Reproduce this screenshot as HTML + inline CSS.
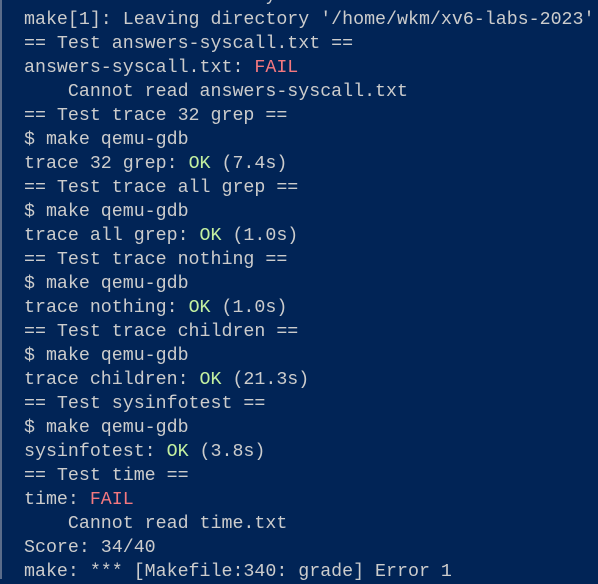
<!DOCTYPE html>
<html><head><meta charset="utf-8"><style>
html,body{margin:0;padding:0;}
body{width:598px;height:579px;overflow:hidden;background:#012456;position:relative;border-left:2px solid #5a6c8a;box-sizing:border-box;}
pre{position:absolute;left:22px;top:-16px;margin:0;font-family:"Liberation Mono",monospace;font-size:18.3px;line-height:24px;color:#cccccc;}
.f{color:#f4787f}.o{color:#c3f0a0}
</style></head><body><pre>                      y
make[1]: Leaving directory '/home/wkm/xv6-labs-2023'
== Test answers-syscall.txt ==
answers-syscall.txt: <span class="f">FAIL</span>
    Cannot read answers-syscall.txt
== Test trace 32 grep ==
$ make qemu-gdb
trace 32 grep: <span class="o">OK</span> (7.4s)
== Test trace all grep ==
$ make qemu-gdb
trace all grep: <span class="o">OK</span> (1.0s)
== Test trace nothing ==
$ make qemu-gdb
trace nothing: <span class="o">OK</span> (1.0s)
== Test trace children ==
$ make qemu-gdb
trace children: <span class="o">OK</span> (21.3s)
== Test sysinfotest ==
$ make qemu-gdb
sysinfotest: <span class="o">OK</span> (3.8s)
== Test time ==
time: <span class="f">FAIL</span>
    Cannot read time.txt
Score: 34/40
make: *** [Makefile:340: grade] Error 1</pre></body></html>
